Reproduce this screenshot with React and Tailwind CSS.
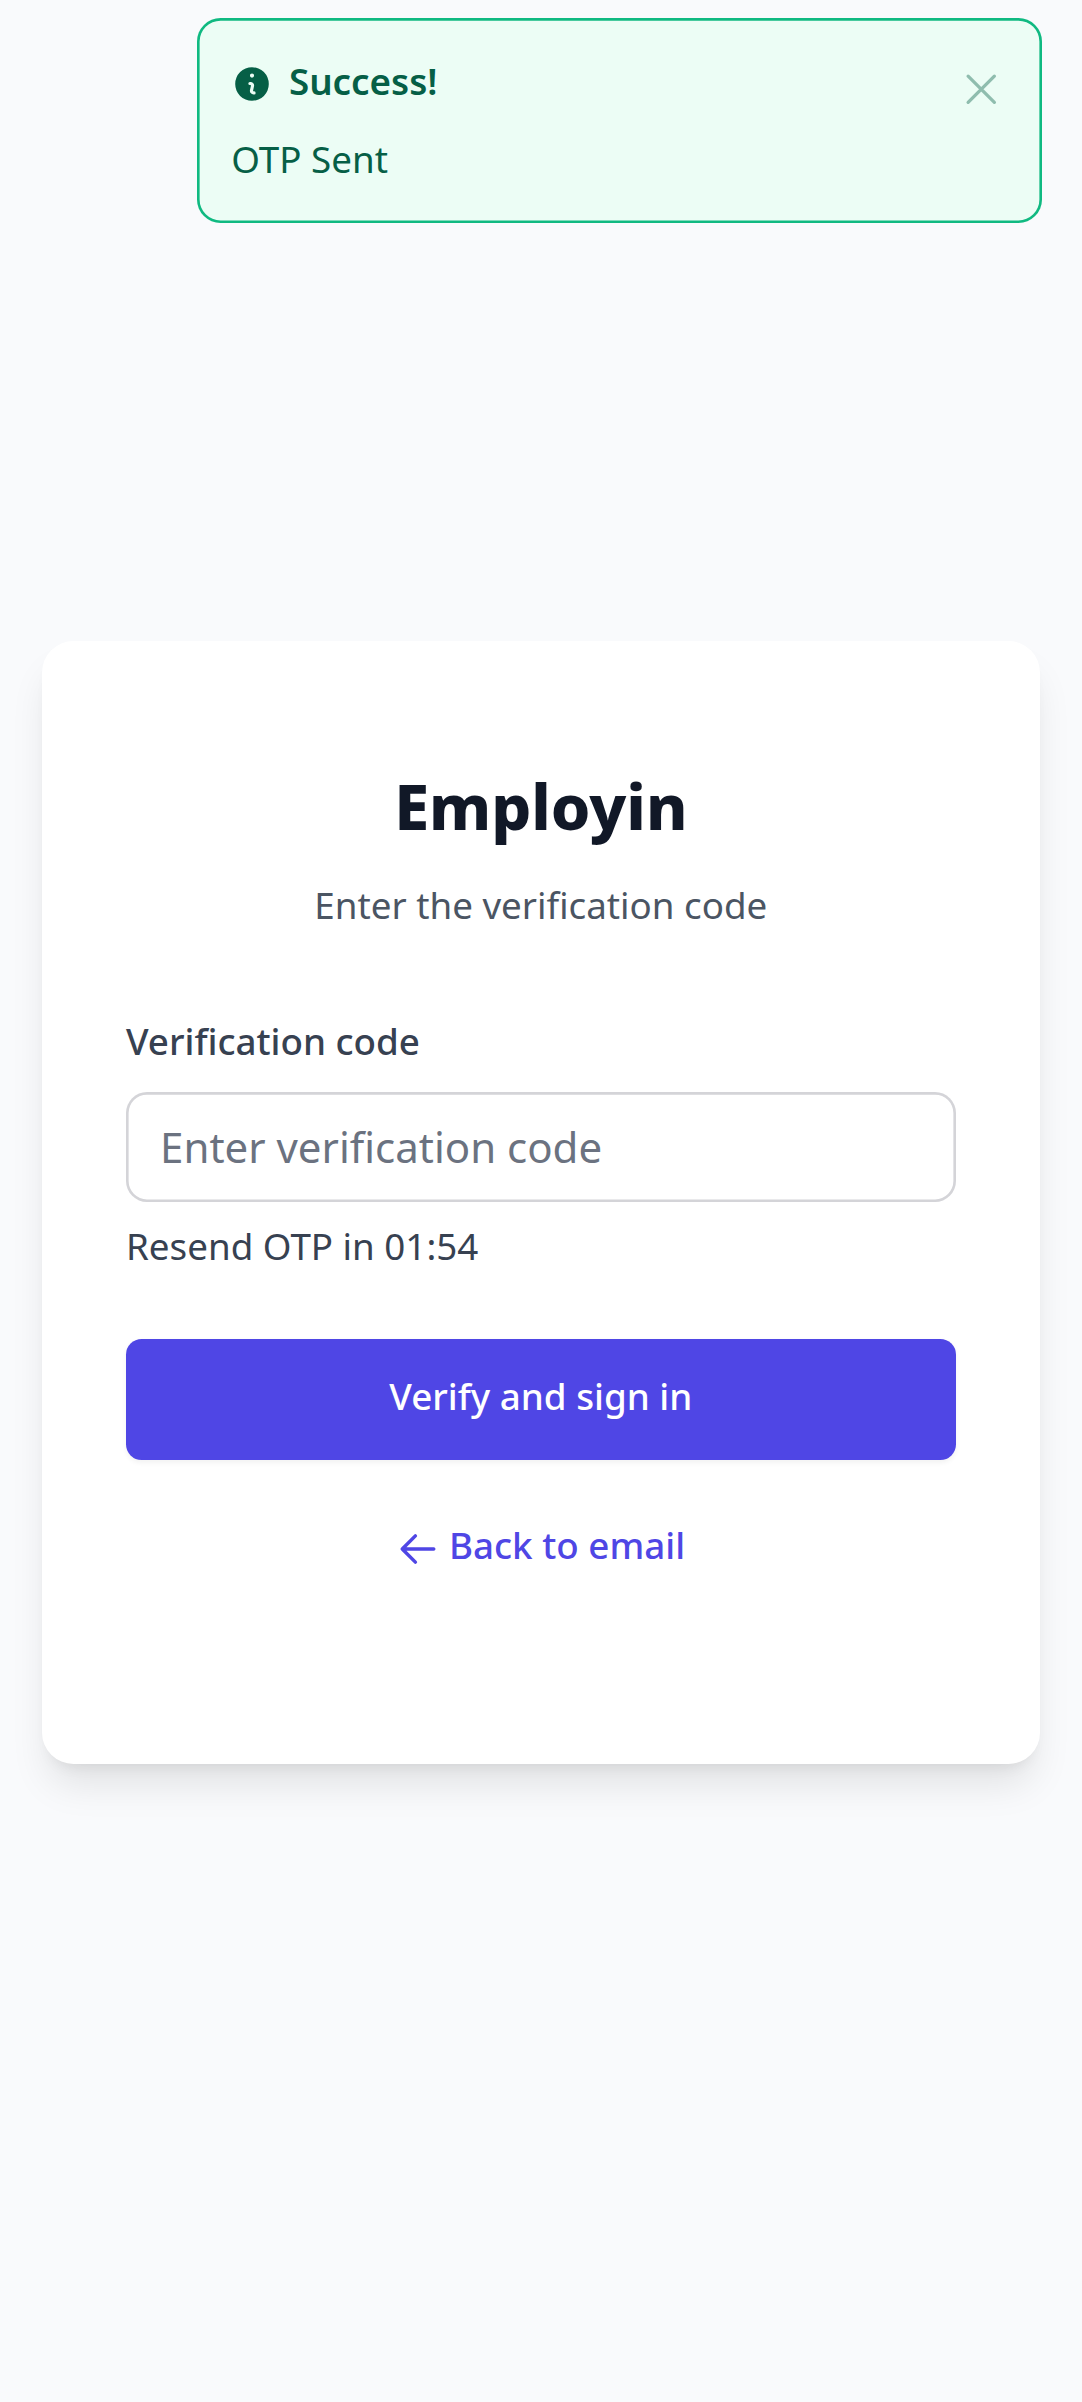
import React from "react";

function InfoIcon() {
  return (
    <svg viewBox="0 0 20 20" fill="currentColor" className="mt-[8.2px] size-[42px] shrink-0">
      <path
        fillRule="evenodd"
        clipRule="evenodd"
        d="M18 10a8 8 0 1 1-16 0 8 8 0 0 1 16 0Zm-7-4a1 1 0 1 1-2 0 1 1 0 0 1 2 0ZM9 9a.75.75 0 0 0 0 1.5h.253a.25.25 0 0 1 .244.304l-.459 2.066A1.75 1.75 0 0 0 10.747 15H11a.75.75 0 0 0 0-1.5h-.253a.25.25 0 0 1-.244-.304l.459-2.066A1.75 1.75 0 0 0 9.253 9H9Z"
      />
    </svg>
  );
}

function CloseIcon() {
  return (
    <svg viewBox="0 0 24 24" fill="none" stroke="currentColor" strokeWidth="1.5" strokeLinecap="round" strokeLinejoin="round" className="size-[52.5px]">
      <path d="M6 18 18 6M6 6l12 12" />
    </svg>
  );
}

function ArrowLeftIcon() {
  return (
    <svg viewBox="0 0 24 24" fill="none" stroke="currentColor" strokeWidth="2" strokeLinecap="round" strokeLinejoin="round" className="mt-[9px] size-[42px] shrink-0">
      <path d="M10.5 19.5 3 12m0 0 7.5-7.5M3 12h18" />
    </svg>
  );
}

function Toast() {
  return (
    <div
      role="alert"
      className="mt-[18.375px] mr-[40.3px] ml-auto flex h-[205px] w-[844.6px] items-start justify-between rounded-[23.6px] bg-[#ecfdf5] pt-[36.4px] pr-[33.8px] pl-[34.1px] text-[#065f46] shadow-[inset_0_0_0_2.625px_#10b981]"
    >
      <div>
        <div className="flex items-start">
          <InfoIcon />
          <h3 className="ml-[15.75px] text-[36.75px] leading-[52.5px] font-semibold">Success!</h3>
        </div>
        <p className="mt-[25.5px] text-[36.75px] leading-[52.5px]">OTP Sent</p>
      </div>
      <button type="button" aria-label="Close" className="mt-[8px] opacity-40">
        <CloseIcon />
      </button>
    </div>
  );
}

export default function App() {
  return (
    <div className="h-[2402px] w-full overflow-hidden bg-[#f9fafc] font-['Noto_Sans',sans-serif]">
      <div className="flow-root h-[640.5px]">
        <Toast />
      </div>
      <main className="mx-[42px] flex h-[1123.5px] w-[997.6px] flex-col rounded-[31.5px] bg-white px-[84px] pt-[123px] shadow-[0_26.25px_39.375px_-7.875px_rgba(0,0,0,0.1),0_10.5px_15.75px_-10.5px_rgba(0,0,0,0.1)]">
        <h1 className="text-center text-[63px] leading-[84px] font-extrabold text-[#111827]">Employin</h1>
        <p className="mt-[31px] text-center text-[36.75px] leading-[52.5px] text-[#4b5563]">
          Enter the verification code
        </p>
        <label htmlFor="code" className="mt-[83.5px] text-[36.75px] leading-[52.5px] font-medium text-[#374151]">
          Verification code
        </label>
        <input
          id="code"
          placeholder="Enter verification code"
          className="mt-[25px] h-[110.25px] w-full rounded-[21px] px-[34.1px] pb-[2px] text-[42px] leading-[63px] text-[#111827] shadow-[inset_0_0_0_2.625px_#d4d4d8] placeholder:text-[#6b7280] placeholder:opacity-100"
        />
        <p className="mt-[17.75px] text-[36.75px] leading-[52.5px] text-[#374151]">Resend OTP in 01:54</p>
        <button
          type="button"
          className="mt-[66.5px] h-[120.75px] w-full rounded-[15.75px] bg-[#4f46e5] pb-[7px] text-[36.75px] leading-[52.5px] font-medium text-white shadow-[0_2.625px_5.25px_0_rgba(0,0,0,0.05)]"
        >
          Verify and sign in
        </button>
        <a href="#" className="mt-[58.75px] flex items-start justify-center text-[36.75px] leading-[52.5px] font-medium text-[#4f46e5]">
          <ArrowLeftIcon />
          <span className="ml-[10.5px]">Back to email</span>
        </a>
      </main>
    </div>
  );
}
